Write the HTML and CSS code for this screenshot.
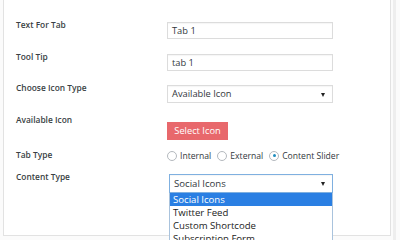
FILE: index.html
```html
<!DOCTYPE html>
<html>
<head>
<meta charset="utf-8">
<link rel="stylesheet" href="styles.css">
</head>
<body>
<div class="page">
  <div class="panel">
    <div class="row r1">
      <div class="label">Text For Tab</div>
      <div class="field"><div class="input">Tab 1</div></div>
    </div>
    <div class="row r2">
      <div class="label">Tool Tip</div>
      <div class="field"><div class="input">tab 1</div></div>
    </div>
    <div class="row r3">
      <div class="label">Choose Icon Type</div>
      <div class="field"><div class="input select">Available Icon<span class="arrow"></span></div></div>
    </div>
    <div class="row r4">
      <div class="label">Available Icon</div>
      <div class="field"><div class="btn">Select Icon</div></div>
    </div>
    <div class="row r5">
      <div class="label">Tab Type</div>
      <div class="field radios">
        <span class="radio"></span><span class="rlabel l1">Internal</span>
        <span class="radio"></span><span class="rlabel l2">External</span>
        <span class="radio on"></span><span class="rlabel">Content Slider</span>
      </div>
    </div>
    <div class="row r6">
      <div class="label">Content Type</div>
      <div class="field">
        <div class="dd">
          <div class="input select focus">Social Icons<span class="arrow"></span></div>
          <div class="list">
            <div class="opt sel">Social Icons</div>
            <div class="opt">Twitter Feed</div>
            <div class="opt">Custom Shortcode</div>
            <div class="opt">Subscription Form</div>
          </div>
        </div>
      </div>
    </div>
  </div>
  <div class="side"></div>
</div>
</body>
</html>
```
FILE: styles.css
```css
html, body {
  margin: 0;
  padding: 0;
  width: 400px;
  height: 240px;
  overflow: hidden;
  background: #fbfbfb;
  font-family: "Open Sans", "Noto Sans", sans-serif;
  color: #23282d;
}
.page {
  display: flex;
  height: 240px;
  padding-left: 3px;
}
.panel {
  width: 388px;
  height: 236px;
  background: #fff;
  border: 1px solid #e2e2e2;
  border-top: none;
  padding-top: 22px;
  padding-left: 12px;
  box-sizing: border-box;
}
.side {
  width: 3px;
  margin-left: 2px;
  background: #eeeeee;
}
.row {
  display: flex;
  align-items: flex-start;
}
.r1 { height: 32px; }
.r2 { height: 31px; }
.r3 { height: 32px; }
.r4 { height: 33px; }
.r5 { height: 24px; }
.label {
  width: 151px;
  font-size: 8.4px;
  font-weight: 600;
  line-height: 12px;
  margin-top: -3px;
  color: #3a3f44;
  white-space: nowrap;
}
.field {
  width: 166px;
}
.input {
  position: relative;
  height: 17px;
  box-sizing: border-box;
  border: 1px solid #dcdcdc;
  box-shadow: inset 0 1px 1px rgba(0,0,0,0.04);
  font-size: 9.3px;
  line-height: 15px;
  padding-left: 4px;
  color: #32373c;
  background: #fff;
}
.select { height: 18px; line-height: 16px; }
.arrow {
  position: absolute;
  right: 7px;
  top: 7px;
  width: 0;
  height: 0;
  border-left: 2.5px solid transparent;
  border-right: 2.5px solid transparent;
  border-top: 4px solid #222;
}
.btn {
  display: inline-block;
  width: 61px;
  height: 18px;
  background: #e8686c;
  color: #fff;
  font-size: 9.3px;
  line-height: 18px;
  text-align: center;
}
.radios {
  display: flex;
  align-items: center;
  height: 11px;
  margin-top: 0;
  font-size: 8.6px;
  color: #32373c;
  white-space: nowrap;
  width: 200px;
}
.r5 .label { margin-top: -1px; }
.radio {
  flex: none;
  width: 10px;
  height: 10px;
  border: 1px solid #b4b9be;
  border-radius: 50%;
  box-sizing: border-box;
  margin-right: 3px;
  position: relative;
  background: #fff;
}
.radio.on::after {
  content: "";
  position: absolute;
  left: 2.5px;
  top: 2.5px;
  width: 3px;
  height: 3px;
  border-radius: 50%;
  background: #1e8cbe;
}
.rlabel { margin-right: 6px; }
.dd {
  position: relative;
  margin-left: 2px;
  width: 164px;
}
.focus {
  height: 19px;
  border: 1px solid #7fb0e0;
  line-height: 17px;
  font-size: 9.6px;
}
.list {
  position: absolute;
  left: 0;
  top: 19px;
  width: 164px;
  box-sizing: border-box;
  border: 1px solid #a9c3dd;
  border-top: none;
  background: #fff;
  z-index: 2;
}
.opt {
  height: 13px;
  line-height: 13px;
  font-size: 9.6px;
  padding-left: 3px;
  color: #222;
  white-space: nowrap;
}
.opt.sel {
  background: #2a7fe3;
  color: #fff;
}
```
